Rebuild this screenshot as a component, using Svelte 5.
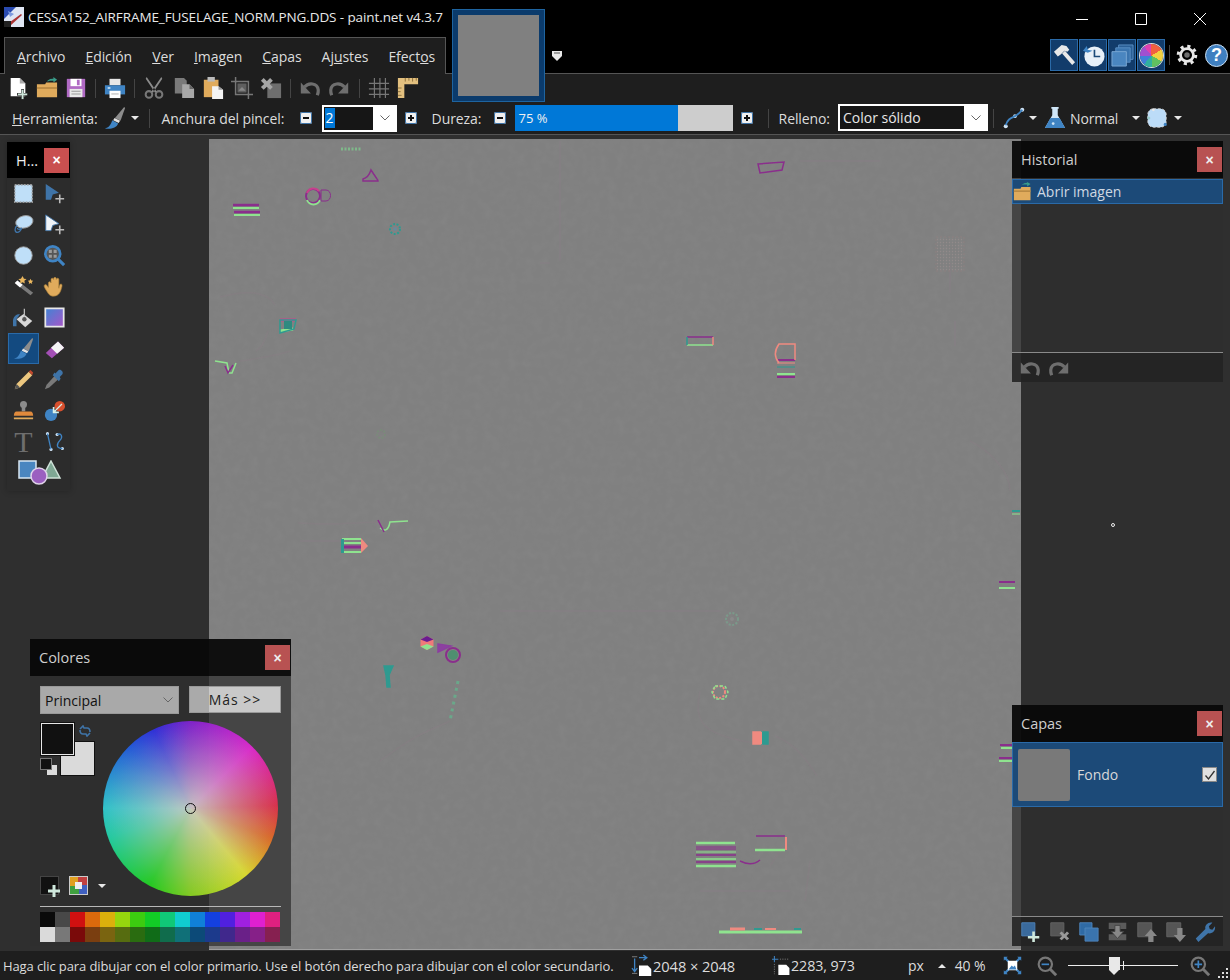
<script>
  const icons = {
    new: '<path d="M4 1h10l6 6v14H4z" fill="#fff"/><path d="M14 1l6 6h-6z" fill="#aaa"/><path d="M15.500 13h3v4.500H23v3h-4.500V25h-3v-4.500H11v-3h4.500z" fill="#2d2d2d"/><path d="M16 14h2v4h4v2h-4v4h-2v-4h-4v-2h4z" fill="#cfe8dc"/>',
    open: '<path d="M1 8h9l1-2h12v16H1z" fill="#e0ab5c"/><path d="M1 11h22v2H1z" fill="#b98a44"/><path d="M12 5c2-3 5-3 7-3V0l4 3-4 3V4c-3 0-5 0-7 1z" fill="#3a9d8a"/>',
    save: '<path d="M2 2h20v20H2z" fill="#b06ac4"/><path d="M6 2h12v8H6z" fill="#fff"/><path d="M13 3h3v6h-3z" fill="#b06ac4"/><path d="M5 13h14v9H5z" fill="#e8e8e8"/><path d="M7 15h10v1H7zm0 3h10v1H7z" fill="#999"/>',
    print: '<path d="M6 2h12v7H6z" fill="#e6e6e6"/><path d="M1 9h22v10H1z" fill="#3f84c4"/><path d="M6 15h12v8H6z" fill="#fff"/><path d="M8 18h8v1H8z" fill="#aaa"/><path d="M4 11h3v2H4z" fill="#bcd8f0"/>',
    cut: '<g fill="none" stroke="#777" stroke-width="2.200"><circle cx="6.500" cy="19" r="3.600"/><circle cx="17.500" cy="19" r="3.600"/></g><path d="M4 0l11 16-2 1L3 2zM20 0L9 16l2 1L21 2z" fill="#8c8c8c"/>',
    copy: '<path d="M2 1h10l3 3v14H2z" fill="#7a7a7a"/><path d="M10 8h8l5 5v10H10z" fill="#a8a8a8"/><path d="M18 8l5 5h-5z" fill="#666"/>',
    paste: '<path d="M2 3h16v19H2z" fill="#e0ab5c"/><path d="M6 0h8v5H6z" fill="#bbb"/><path d="M11 10h7l5 4v10H11z" fill="#f4f4f4"/><path d="M18 10l5 4h-5z" fill="#999"/>',
    crop: '<path d="M5 0v19h19" fill="none" stroke="#777" stroke-width="1.600"/><path d="M0 5h19v19" fill="none" stroke="#777" stroke-width="1.600"/><path d="M7 7h10v10H7z" fill="#5f5f5f"/><path d="M8 15l4-4 4 4z" fill="#888"/>',
    del: '<path d="M8 7h15v16H8z" fill="#6e6e6e"/><path d="M1 4l3-3 3.500 3.500L11 1l3 3-3.500 3.500L14 11l-3 3-3.500-3.500L4 14l-3-3 3.500-3.500z" fill="#a5a5a5"/>',
    undo: '<path d="M6 11c4-5 14-5 15 3 .2 2-.3 4-1 6" fill="none" stroke="#6e6e6e" stroke-width="3.500"/><path d="M2 6v12h11z" fill="#6e6e6e"/>',
    redo: '<path d="M18 11c-4-5-14-5-15 3-.2 2 .3 4 1 6" fill="none" stroke="#6e6e6e" stroke-width="3.500"/><path d="M22 6v12H11z" fill="#6e6e6e"/>',
    grid: '<path d="M7 1v22M13 1v22M19 1v22M1 7h22M1 13h22M1 19h22" stroke="#777" stroke-width="1.300" fill="none"/>',
    rulers: '<path d="M1 1h22v7H8v15H1z" fill="#e3c07f"/><path d="M9 1v4M13 1v3M17 1v4M21 1v3M1 12h4M1 16h3M1 20h4" stroke="#8a6d3a" stroke-width="1"/>',
    brush: '<path d="M22 0l1 1-5 14-6-3z" fill="#8c8c8c"/><path d="M11.500 12l6 3-1.500 2.500-6-3z" fill="#e2e2e2"/><path d="M9 14.500l6.500 3.500c-2 5-8 6.500-14.500 5.500 4-1 6-3 8-9z" fill="#3f84c4"/>',
    pathcurve: '<circle cx="3" cy="21" r="2.200" fill="#cfe3f5"/><circle cx="21" cy="3" r="2.200" fill="#cfe3f5"/><circle cx="13" cy="10" r="2" fill="#cfe3f5"/><path d="M3 20C5 13 9 12 13 10s5-3 8-7" fill="none" stroke="#3f84c4" stroke-width="2"/>',
    flask: '<path d="M8 0h8v2h-1v7l8 14H1L9 9V2H8z" fill="#cfe6f8"/><path d="M7 12h10l6 11H1z" fill="#3f84c4"/><circle cx="10" cy="18" r="1.500" fill="#cfe6f8"/>',
    selection: '<rect x="2" y="2" width="20" height="20" rx="6" fill="#bcdcf8" stroke="#d8d8d8" stroke-dasharray="3 2"/><circle cx="3" cy="12" r="1.700" fill="#9cc"/><circle cx="21" cy="19" r="1.700" fill="#3f84c4"/><circle cx="8" cy="3" r="1.500" fill="#e8e8e8"/>',
    hammer: '<path d="M1 8L9 1l5 1 3 4-2 2-3-1-4 4-3 2z" fill="#e8e8e8"/><path d="M9.500 10l3-3L23 19l-3 3z" fill="#e8e8e8"/>',
    clock: '<circle cx="13" cy="13" r="10.500" fill="#e8f0f8"/><path d="M13 6v7h6" fill="none" stroke="#1c4a78" stroke-width="1.700"/><path d="M1 7l4-5 1 4 5 1-5 2z" fill="#3f84c4"/>',
    layers: '<path d="M8 1h15v15H8z" fill="#2a5f96" stroke="#5b8fc4"/><path d="M5 4h15v15H5z" fill="#3a74ae" stroke="#5b8fc4"/><path d="M1 8h15v15H1z" fill="#4a86c0" stroke="#7aa7d4"/>',
    gear: '<circle cx="12" cy="12" r="7" fill="none" stroke="#e8e8e8" stroke-width="3"/><circle cx="12" cy="12" r="9.500" fill="none" stroke="#e8e8e8" stroke-width="3.400" stroke-dasharray="3.400 4.060"/><circle cx="12" cy="12" r="3" fill="#6d6d6d"/>',
    rectsel: '<rect x="2" y="2" width="20" height="20" fill="#bfdff8" stroke="#9a9a9a" stroke-width="1.500" stroke-dasharray="2 1.500"/>',
    movepix: '<path d="M2 1l15 10-7 2-2 6-6 0z" fill="#3f74a8"/><path d="M18 13v10M13 18h10" stroke="#bbb" stroke-width="1.800"/>',
    lasso: '<ellipse cx="13" cy="9" rx="10" ry="7" fill="#bfdff8" stroke="#999" transform="rotate(-15 13 9)"/><path d="M5 13c-4 3-3 8 0 8s4-3 5-5c-2 2-5 2-5 0" fill="none" stroke="#3f74a8" stroke-width="1.500"/>',
    movesel: '<path d="M2 1l15 10-7 2-2 6-6 0z" fill="#f0f4f8" stroke="#3f74a8"/><path d="M18 13v10M13 18h10" stroke="#bbb" stroke-width="1.800"/>',
    ellipse: '<circle cx="12" cy="12" r="10" fill="#bfdff8" stroke="#999"/>',
    zoom: '<path d="M15 15l8 8" stroke="#3f84c4" stroke-width="3.500"/><circle cx="10" cy="10" r="8.500" fill="#555" stroke="#3f84c4" stroke-width="3"/><path d="M5.500 5.500h3.500v3.500H5.500zM11 5.500h3.500v3.500H11zM5.500 11h3.500v3.500H5.500zM11 11h3.500v3.500H11z" fill="#9a9a9a"/>',
    wand: '<path d="M2 8l3-3 18 14-3 3z" fill="#7a7a7a"/><path d="M2 8l3-3 6 5-3 3z" fill="#fff"/><path d="M11 0l1.500 3 3 .5-2.500 2 .5 3-2.500-1.500L8 8.500l.5-3-2.500-2 3-.5zM20 3l1 2 2 .5-1.500 1.500.5 2-2-1-2 1 .5-2L17 5.500l2-.5z" fill="#eab75e"/>',
    hand: '<path d="M5 13V8c0-2 3-2 3 0V4c0-2 3-2 3 0V3c0-2 3-2 3 0v1c0-2 3-2 3 0v10c0 0 0-4 2-5 2 0 2 2 1 5-1 4-3 9-9 9-5 0-6-3-8-6-2-3-4-6-2-7 2-1 4 3 4 3z" fill="#e0ab5c" stroke="#a37935" stroke-width=".7"/>',
    bucket: '<path d="M12 8l10 8-8 7-10-9z" fill="#d8d8d8"/><path d="M13 2v12" stroke="#bbb" stroke-width="1.500"/><circle cx="13" cy="14" r="2.500" fill="#555"/><path d="M8 8c-5 0-8 4-8 8v6h4v-7c0-2 1-3 2-4z" fill="#3f74a8"/>',
    gradient: '<path d="M1.500 1.500h21v21h-21z" fill="url(#grad)" stroke="#e8e8e8" stroke-width="2"/><defs><linearGradient id="grad" x1="0" y1="0" x2="1" y2="1"><stop offset="0" stop-color="#3f84d4"/><stop offset="1" stop-color="#a855c8"/></linearGradient></defs>',
    eraser: '<path d="M2 17L16 4l7 7-14 12z" fill="#a34fb5"/><path d="M8 11l8-7 7 7-8 7z" fill="#f5f5f5"/>',
    pencil: '<path d="M2 23l2-6L18 3l4 4L8 21z" fill="#ecc77f"/><path d="M2 23l2-6 4 4z" fill="#555"/><path d="M18 3l2-2 3 3-1 3z" fill="#c2482e"/>',
    dropper: '<path d="M1 23l2-5 9-10 4 4-10 9z" fill="#7a7a7a"/><path d="M10 7l7 7 2-3-1-2 3-3c2-3-3-7-5-4l-3 3-1-1z" fill="#3f74a8"/>',
    stamp: '<circle cx="12" cy="5" r="4" fill="#8c8c8c"/><path d="M10 8h4v5h-4z" fill="#8c8c8c"/><path d="M4 13h16c2 0 3 2 3 5H1c0-3 1-5 3-5z" fill="#e08a3c"/><path d="M1 20h22v2H1z" fill="#e0ab5c"/>',
    recolor: '<circle cx="18" cy="7" r="6" fill="#d8502e"/><circle cx="8" cy="17" r="7" fill="#3f84c4"/><path d="M20 4l-8 8 0-4-2 0 0 7h7l0-2-4 0 8-8z" fill="#d8f0e8"/>',
    curve: '<circle cx="4" cy="3" r="1.800" fill="#cfe3f5"/><circle cx="8" cy="21" r="1.800" fill="#cfe3f5"/><circle cx="15" cy="4" r="1.800" fill="#cfe3f5"/><circle cx="21" cy="20" r="1.800" fill="#cfe3f5"/><path d="M4 3l4 18M15 4c5-2 7 3 3 7s-4 9 3 9" fill="none" stroke="#3f84c4" stroke-width="1.500"/>',
    fit: '<path d="M1 1h5l-1.500 1.500L8 6 6 8 2.500 4.500 1 6zM23 1v5l-1.500-1.500L18 8l-2-2 3.500-3.500L18 1zM1 23v-5l1.500 1.500L6 16l2 2-3.500 3.500L6 23zM23 23h-5l1.500-1.500L16 18l2-2 3.500 3.500L23 18z" fill="#3f84c4"/><path d="M6 6h12v12H6z" fill="#fff"/><path d="M7 17l4-5 2 2 2-2 2 5z" fill="#3f84c4"/>',
    zoomout: '<path d="M15 15l8 8" stroke="#777" stroke-width="3.500"/><circle cx="10" cy="10" r="8" fill="none" stroke="#777" stroke-width="2.600"/><path d="M5.500 9h9v2h-9z" fill="#3f84c4"/>',
    zoomin: '<path d="M15 15l8 8" stroke="#777" stroke-width="3.500"/><circle cx="10" cy="10" r="8" fill="none" stroke="#777" stroke-width="2.600"/><path d="M5.500 9h3.500V5.500h2V9h3.500v2H11v3.500H9V11H5.500z" fill="#3f84c4"/>',
    size: '<path d="M8 12h10l4 4v8H8z" fill="#fff"/><path d="M8 3h8M13 0l4 3-4 3" fill="none" stroke="#3f84c4" stroke-width="1.500"/><path d="M3 4v14M0 15l3 4 3-4" fill="none" stroke="#3f84c4" stroke-width="1.500"/><path d="M0 21h6M0 2h6" stroke="#888"/>',
    cursor: '<path d="M3 0v8M0 4h8" stroke="#3f84c4" stroke-width="1.300"/><path d="M3 10v13M10 4h12" stroke="#888" stroke-dasharray="1.500 1.500"/><path d="M8 11h10l4 4v9H8z" fill="#fff"/>',
    lnew: '<path d="M2 2h15v15H2z" fill="#3a6a9c" stroke="#4f85bc"/><path d="M14 12h3v5h5v3h-5v4h-3v-4H9v-3h5z" fill="#cfe8dc"/>',
    ldel: '<path d="M2 2h15v15H2z" fill="#555" stroke="#666"/><path d="M12 14l2.500-2 3 3 3-3 2.500 2-3 3 3 3-2.500 2-3-3-3 3-2.500-2 3-3z" fill="#999"/>',
    ldup: '<path d="M2 2h14v14H2z" fill="#2f6aa4" stroke="#4f85bc"/><path d="M8 8h15v15H8z" fill="#3a74ae" stroke="#4f85bc"/>',
    lmerge: '<path d="M2 2h20v7H2zM2 15h20v7H2z" fill="#5b5b5b"/><path d="M9 5h6v7h4l-7 8-7-8h4z" fill="#888" stroke="#444"/>',
    lup: '<path d="M2 2h16v16H2z" fill="#555" stroke="#666"/><path d="M17 9l7 8h-4v7h-6v-7h-4z" fill="#888"/>',
    ldown: '<path d="M2 2h16v16H2z" fill="#555" stroke="#666"/><path d="M14 8h6v8h4l-7 8-7-8h4z" fill="#888"/>',
    wrench: '<path d="M2 20L13 9c-1-4 3-8 8-7l-4 4 1 3 3 1 3-4c1 5-3 9-8 8L5 24z" fill="#3f74a8"/>',
    folderh: '<path d="M1 8h8l1-2h11v16H1z" fill="#e0ab5c"/><path d="M1 10h20v2H1z" fill="#b98a44"/><path d="M10 4c2-2 5-3 7-3V0l4 2.500-4 3V3c-3 0-5 0-7 1z" fill="#3a9d8a"/>'
  };

  const fileTools = [['new', 'open', 'save'], ['print'], ['cut', 'copy', 'paste', 'crop', 'del'], ['undo', 'redo'], ['grid', 'rulers']];
  const tools = ['rectsel', 'movepix', 'lasso', 'movesel', 'ellipse', 'zoom', 'wand', 'hand', 'bucket', 'gradient', 'brush', 'eraser', 'pencil', 'dropper', 'stamp', 'recolor', 'T', 'curve'];

  const topColors = ['#0a0a0a', '#484848', '#d01010', '#dc6a0c', '#dcb00c', '#96d60e', '#3ccc10', '#12cc26', '#10c878', '#10ccd0', '#1080d8', '#1440e0', '#5020e0', '#a020e0', '#e020d0', '#e02080'];
  const lowColors = ['#dadada', '#787878', '#7a0a0a', '#7a3e10', '#7a6410', '#566c10', '#2a6c10', '#106c18', '#106c4c', '#107078', '#0c4a78', '#1c3a8c', '#40288c', '#6a2088', '#862088', '#862050'];

  const P = '#8a2f8c', G = '#8fe38f', T = '#2f9a90', S = '#ef8a80';
  // marks on the canvas, in page coordinates
  const lines = [
    [233, 204, 259, 204, P, 2.500], [233, 207, 259, 207, G, 2], [234, 211, 260, 211, P, 2.500], [234, 214, 260, 214, G, 2],
    [687, 336, 713, 336, P, 1.500], [687, 344, 713, 344, G, 1.500], [687, 336, 687, 344, T, 1.500], [713, 336, 713, 344, S, 1.500],
    [778, 359, 795, 359, P, 2], [777, 362, 795, 362, S, 1], [777, 366, 795, 366, T, 1], [777, 373, 795, 373, G, 2], [777, 376, 795, 376, P, 2],
    [342, 538, 361, 538, G, 2], [342, 542, 361, 542, G, 2], [342, 546, 361, 546, P, 3], [342, 551, 361, 551, G, 2],
    [696, 842, 735, 842, G, 2.500], [696, 846, 736, 846, P, 1], [696, 848, 736, 848, P, 1], [696, 851, 736, 851, G, 1], [696, 854, 736, 854, P, 1.500], [696, 858, 736, 858, G, 1.500], [696, 861, 736, 861, P, 1.500], [696, 865, 736, 865, G, 2.500],
    [756, 835, 785, 835, P, 1.500], [755, 849, 785, 849, G, 2.500], [786, 836, 786, 849, S, 2],
    [719, 931, 802, 931, G, 3], [730, 928, 745, 928, S, 3], [754, 928, 762, 928, T, 2], [765, 928, 776, 928, S, 2], [794, 928, 801, 928, T, 2],
    [1000, 744, 1012, 744, P, 2], [1001, 747, 1012, 747, G, 2], [999, 757, 1012, 757, P, 2], [999, 760, 1012, 760, G, 2],
    [999, 581, 1015, 581, P, 2], [999, 587, 1015, 587, G, 2], [1012, 510, 1020, 510, T, 2], [1012, 513, 1020, 513, G, 1],
    [341, 148, 361, 148, '#7fb98a', 3, '2 1.500'], [280, 319, 296, 319, '#c8408c', 3], [280, 330, 293, 328, G, 3]
  ];
  const faint = [
    'M220 296c30-8 48-4 55 8', 'M268 330c-4 12-6 16-12 20', 'M560 140v120', 'M700 690c-6 30 0 44 55 52', 'M775 735c16 6 30 20 42 40',
    'M298 522c30 2 50 0 82-1', 'M300 540h40', 'M380 760c40-30 50-30 70-40', 'M790 835l-20 30', 'M810 860l-5 40', 'M540 262h10', 'M700 890h90',
    'M950 262v30', 'M955 320v25', 'M880 160h-80', 'M240 360c20-3 40-6 50-10', 'M500 610h220', 'M970 440c20 10 40 30 40 50'
  ];
  const shapes = [
    ['M758 163l26-2-2 8-22 3z', P], ['M363 178c4-1 6-3 8-9l6 9c1 1 1 2 1 2h-15z', P], ['M280 319h16l-2 9-14 4z', T],
    ['M215 360l12 2 2 10 3 0 4-10', G], ['M779 362c-5-6-5-12 0-19h16v16', S], ['M380 527c4 3 8 4 10-6l18-1', G], ['M378 519l6 12', P],
    ['M384 665h9l-4 9 1 12h-3l-1-12z', T], ['M438 643l13 2-13 6z', '#8c3fa0'], ['M753 731h9v12h-9z', S], ['M762 731h6v12h-6z', T],
    ['M740 860c8 4 14 4 20-1', P], ['M225 365l3 7 5-8', P]
  ];
  const wells = [[313, 195, 7, P], [395, 228, 5, T], [381, 433, 4, '#7a8a7a'], [732, 618, 6, '#7a9a8a'], [719, 691, 6, S], [453, 654, 7, P]];
</script>

{#snippet icon(name, size = 20)}
  <svg class="ic" viewBox="0 0 24 24" width={size} height={size}>{@html icons[name]}</svg>
{/snippet}

{#snippet close()}
  <span class="close">×</span>
{/snippet}

{#snippet drop()}
  <span class="drop"></span>
{/snippet}

{#snippet chevron()}
  <svg class="chev" viewBox="0 0 10 6" width="10" height="6"><path d="M.5.5L5 5 9.500.5" fill="none" stroke="#666"/></svg>
{/snippet}

{#snippet stepper(sign)}
  <span class="step"><i></i>{#if sign === '+'}<b></b>{/if}</span>
{/snippet}

<div class="app">
  <header class="titlebar">
    <svg class="appicon" viewBox="0 0 20 20" width="20" height="20">
      <path d="M0 0h20v20H0z" fill="#dfe6f3"/><path d="M0 0h12L0 12z" fill="#2a4bb0"/><path d="M4 4l6 3-4 3z" fill="#7d9be0"/><path d="M2 18L17 7l1 1L6 19z" fill="#a33"/><path d="M0 14h7v6H0z" fill="#222"/>
    </svg>
    <span class="doc">CESSA152_AIRFRAME_FUSELAGE_NORM.PNG.DDS - paint.net v4.3.7</span>
    <div class="winctl">
      <svg width="14" height="14" viewBox="0 0 14 14"><path d="M1 7.500h12" stroke="#fff"/></svg>
      <svg width="14" height="14" viewBox="0 0 14 14"><path d="M1.500 1.500h11v11h-11z" fill="none" stroke="#fff"/></svg>
      <svg width="14" height="14" viewBox="0 0 14 14"><path d="M1 1l12 12M13 1L1 13" stroke="#fff"/></svg>
    </div>
  </header>

  <div class="menubar">
    <nav class="menu">
      <span><u>A</u>rchivo</span><span><u>E</u>dición</span><span><u>V</u>er</span><span><u>I</u>magen</span><span><u>C</u>apas</span><span>Aj<u>u</u>stes</span><span>Efect<u>o</u>s</span>
    </nav>
    <div class="tabdrop"><svg viewBox="0 0 12 12" width="12" height="12"><path d="M1 1h10v5l-5 5-5-5z" fill="#e8e8e8"/><path d="M3 3h6" stroke="#555"/></svg></div>
    <div class="winbtns">
      <span class="wb">{@render icon('hammer', 23)}</span>
      <span class="wb">{@render icon('clock', 23)}</span>
      <span class="wb">{@render icon('layers', 23)}</span>
      <span class="wb"><span class="pie"></span></span>
      <i class="vsep"></i>
      {@render icon('gear', 22)}
      <span class="help">?</span>
    </div>
  </div>

  <div class="thumb"><div class="thumb-in"></div></div>

  <div class="bar row1">
    {#each fileTools as group, g}
      {#if g > 0}<i class="sep"></i>{/if}
      {#each group as name}
        <span class="cell">{@render icon(name, 22)}</span>
      {/each}
    {/each}
  </div>

  <div class="bar row2">
    <span class="lbl"><u>H</u>erramienta:</span>
    <span class="brushbtn">{@render icon('brush', 22)}{@render drop()}</span>
    <i class="sep s2"></i>
    <span class="lbl w127">Anchura del pincel:</span>
    {@render stepper('-')}
    <div class="combo c75"><span class="cin"><em>2</em></span>{@render chevron()}</div>
    {@render stepper('+')}
    <span class="lbl dureza">Dureza:</span>
    {@render stepper('-')}
    <div class="slider"><div class="fill" style="width: 75%">75 %</div></div>
    {@render stepper('+')}
    <i class="sep s3"></i>
    <span class="lbl">Relleno:</span>
    <div class="combo c150"><span class="cin">Color sólido</span>{@render chevron()}</div>
    <i class="sep s4"></i>
    <span class="opt first">{@render icon('pathcurve', 22)}{@render drop()}</span>
    <span class="opt blend">{@render icon('flask', 22)}<span class="lbl norm">Normal</span>{@render drop()}</span>
    <span class="opt last">{@render icon('selection', 22)}{@render drop()}</span>
  </div>

  <main class="work">
    <div class="canvas">
      <svg viewBox="209 138 812 810" width="812" height="810">
        <defs>
          <filter id="grain" x="0" y="0" width="100%" height="100%">
            <feTurbulence type="fractalNoise" baseFrequency="0.12" numOctaves="2" seed="4" />
            <feColorMatrix values="0 0 0 0 .5  0 0 0 0 .5  0 0 0 0 .5  .9 .9 0 0 -.7" />
          </filter>
          <filter id="soft"><feGaussianBlur stdDeviation="0.45" /></filter>
          <pattern id="hatch" width="3" height="3" patternUnits="userSpaceOnUse">
            <circle cx="1.500" cy="1.500" r=".7" fill="#928a8a" />
          </pattern>
        </defs>
        <rect x="209" y="138" width="812" height="810" fill="#7c7c7c" filter="url(#grain)" opacity=".08" />
        <g filter="url(#soft)">
          {#each faint as d}
            <path {d} fill="none" stroke="#8c7a84" stroke-opacity=".3" stroke-width="1.500" />
          {/each}
          {#each lines as [x1, y1, x2, y2, stroke, w, dash]}
            <line {x1} {y1} {x2} {y2} {stroke} stroke-width={w} stroke-dasharray={dash} />
          {/each}
          {#each shapes as [d, stroke]}
            <path {d} fill="none" {stroke} stroke-width="1.500" />
          {/each}
          <path d="M384 665h9l-4 9 1 12h-3l-1-12z" fill="#2f9a90" />
          <path d="M438 643l13 2-13 6z" fill="#8c3fa0" />
          <rect x="753" y="731" width="9" height="12" fill="#ef8a80" />
          <rect x="762" y="731" width="6" height="12" fill="#2f9a90" />
          <rect x="341" y="538" width="3" height="14" fill="#2f9a90" />
          <path d="M361 537l7 8-7 7z" fill="#ef8a80" />
          <rect x="284" y="320" width="8" height="8" fill="#2f8a80" />
          {#each wells as [cx, cy, r, stroke]}
            <circle {cx} {cy} {r} fill="none" {stroke} stroke-width="2" stroke-dasharray={r < 7 ? '2 1.500' : undefined} />
          {/each}
          <path d="M427 635l6.500 3.500v7L427 649l-6.500-3.500v-7z" fill="#ef7a7a" />
          <path d="M420.500 638.500L427 635l6.500 3.500L427 641z" fill="#6a1f90" />
          <path d="M420.500 645.500L427 649l6.500-3.500L427 643z" fill="#8fe38f" />
          <circle cx="453" cy="654" r="5" fill="#4f8f70" />
          <path d="M307 192a7 7 0 0 1 12 -2" fill="none" stroke="#c8408c" stroke-width="2" />
          <path d="M307 199a7 7 0 0 0 13 0" fill="none" stroke={G} stroke-width="2" />
          <path d="M321 189h5c6 0 6 11 0 11h-5z" fill="none" stroke={P} stroke-width="1" />
          <path d="M458 680l-8 40" stroke="#6aa88a" stroke-width="3" stroke-dasharray="3 4" />
          <rect x="936" y="236" width="28" height="34" fill="url(#hatch)" stroke="#94807f" stroke-opacity=".6" stroke-dasharray="2 2" />
          <path d="M715 685h10l3 6-3 7h-10l-3-7z" fill="none" stroke={G} stroke-width="1.500" stroke-dasharray="3 2" />
          <circle cx="395" cy="228" r="2" fill="#6a8a9a" />
          <circle cx="732" cy="618" r="2" fill="#8a8a8a" />
        </g>
      </svg>
    </div>

    <section class="tools">
      <div class="tbar slim"><span class="ttext white">H...</span><span class="closefull">×</span></div>
      <div class="toolgrid">
        {#each tools as t}
          <span class="tool" class:active={t === 'brush'}>
            {#if t === 'T'}<span class="bigt">T</span>{:else}{@render icon(t, 21)}{/if}
          </span>
        {/each}
      </div>
      <svg class="shapes" viewBox="0 0 44 26" width="44" height="26">
        <rect x="1" y="1" width="17" height="17" fill="#4a86c0" stroke="#d8e6f2" stroke-width="1.500" />
        <path d="M33 1l9 17H24z" fill="#7fa894" stroke="#cfe2d8" stroke-width="1.500" />
        <circle cx="21" cy="16" r="8" fill="#9b5fc0" stroke="#e0d4ea" stroke-width="1.500" />
      </svg>
    </section>

    <section class="float colors">
      <div class="tbar"><span class="ttext">Colores</span>{@render close()}</div>
      <div class="cbody">
        <div class="ctop">
          <div class="picker">Principal{@render chevron()}</div>
          <div class="more">Más &gt;&gt;</div>
        </div>
        <div class="cmid">
          <div class="wells">
            <span class="primary"></span>
            <span class="secondary"></span>
            <span class="reset"></span>
            <svg class="swap" viewBox="0 0 12 12" width="12" height="12"><path d="M1 4l3-3 1 2h3c2 0 3 2 3 4M11 8l-3 3-1-2H4C2 9 1 7 1 5" fill="none" stroke="#3f74a8" stroke-width="1.600"/></svg>
          </div>
          <div class="wheel"><span class="ring"></span></div>
        </div>
        <div class="cbtns">
          <span class="addc"><svg viewBox="0 0 12 12" width="12" height="12"><path d="M4.500 0h3v4.500H12v3H7.500V12h-3V7.500H0v-3h4.500z" fill="#cfe8dc"/></svg></span>
          <span class="pal"><i></i></span>
          {@render drop()}
        </div>
        <hr />
        <div class="swatches">
          {#each [...topColors, ...lowColors] as c}
            <span style="background: {c}"></span>
          {/each}
        </div>
      </div>
    </section>

    <section class="float history">
      <div class="tbar"><span class="ttext">Historial</span>{@render close()}</div>
      <div class="hrow">{@render icon('folderh', 20)}<span>Abrir imagen</span></div>
      <div class="spacer"></div>
      <div class="hfoot">{@render icon('undo', 22)}{@render icon('redo', 22)}</div>
    </section>

    <section class="float layers">
      <div class="tbar"><span class="ttext">Capas</span>{@render close()}</div>
      <div class="lrow">
        <span class="lthumb"></span>
        <span class="lname">Fondo</span>
        <span class="check"><svg viewBox="0 0 12 12" width="12" height="12"><path d="M1.500 6.500L4.500 10l6-8" fill="none" stroke="#333" stroke-width="1.300"/></svg></span>
      </div>
      <div class="spacer"></div>
      <div class="lfoot">
        {#each ['lnew', 'ldel', 'ldup', 'lmerge', 'lup', 'ldown', 'wrench'] as name}
          {@render icon(name, 21)}
        {/each}
      </div>
    </section>

    <span class="cursor"></span>
  </main>

  <footer class="status">
    <span class="hint">Haga clic para dibujar con el color primario. Use el botón derecho para dibujar con el color secundario.</span>
    <span class="sz">{@render icon('size', 21)}2048 × 2048</span>
    <span class="pos">{@render icon('cursor', 19)}2283, 973</span>
    <span class="unit">px</span>
    <span class="up"></span>
    <span class="pct">40 %</span>
    <span class="fit">{@render icon('fit', 19)}</span>
    <span class="zo">{@render icon('zoomout', 20)}</span>
    <div class="zoomtrack"><i class="tick"></i><i class="knob"></i></div>
    <span class="zi">{@render icon('zoomin', 20)}</span>
    <svg class="grip" viewBox="0 0 11 11" width="11" height="11"><path d="M8 1h2v2H8zM4 5h2v2H4zM8 5h2v2H8zM0 9h2v2H0zM4 9h2v2H4zM8 9h2v2H8z" fill="#ddd"/></svg>
  </footer>
</div>

<style>
  :global(body) {
    margin: 0;
    background: #000;
  }
  .app {
    position: relative;
    width: 1230px;
    height: 980px;
    overflow: hidden;
    display: flex;
    flex-direction: column;
    font-family: "Open Sans", "Noto Sans", sans-serif;
    font-size: 14px;
    color: #dcdcdc;
    background: #000;
  }
  .ic {
    display: block;
    flex: none;
    overflow: visible;
  }
  .titlebar {
    height: 37px;
    display: flex;
    align-items: center;
    flex: none;
    color: #e8e8e8;
  }
  .appicon {
    margin: -4px 0 0 4px;
  }
  .doc {
    margin: -4px 0 0 4px;
    font-size: 13.500px;
    letter-spacing: -0.1px;
  }
  .winctl {
    margin-left: auto;
    margin-right: 23px;
    display: flex;
    gap: 45px;
  }
  .menubar {
    height: 37px;
    flex: none;
    display: flex;
    border-bottom: 1px solid #555;
    box-sizing: border-box;
  }
  .menu {
    margin-left: 4px;
    width: 442px;
    height: 37px;
    box-sizing: border-box;
    padding: 9px 0 0 12px;
    display: flex;
    gap: 20px;
    background: #1e1e1e;
    border: 1px solid #555;
    border-bottom: 0;
    font-size: 14px;
    letter-spacing: -0.06px;
    line-height: 20px;
  }
  .tabdrop {
    margin: 10px 0 0 105px;
  }
  .winbtns {
    margin-left: auto;
    display: flex;
    align-items: center;
    height: 36px;
    margin-top: -6px;
    padding: 12px 2px 0 0;
    box-sizing: border-box;
    gap: 1px;
  }
  .winbtns .help {
    margin-left: 6px;
  }
  .wb {
    width: 28px;
    height: 32px;
    box-sizing: border-box;
    display: flex;
    align-items: center;
    justify-content: center;
    background: #123c6b;
    border: 1px solid #2a6aa8;
  }
  .pie {
    width: 23px;
    height: 23px;
    border-radius: 50%;
    background: conic-gradient(#f06040 0 60deg, #f0d040 60deg 120deg, #60c060 120deg 180deg, #30b0a0 180deg 220deg, #4080d8 220deg 270deg, #a050d0 270deg 320deg, #e040b0 320deg);
    box-shadow: 0 0 0 1px #ddd;
  }
  .vsep {
    width: 1px;
    height: 20px;
    background: #444;
    margin: 0 5px 0 3px;
  }
  .help {
    width: 23px;
    height: 23px;
    border-radius: 50%;
    background: #3f7fc0;
    border: 1px solid #c8ddf0;
    box-sizing: border-box;
    color: #fff;
    font: 700 18px/21px "Liberation Sans", sans-serif;
    text-align: center;
  }
  .thumb {
    position: absolute;
    left: 452px;
    top: 9px;
    width: 93px;
    height: 93px;
    box-sizing: border-box;
    padding: 5px;
    background: #0b3b6c;
    border: 1px solid #1e64a0;
  }
  .thumb-in {
    height: 100%;
    background: #808080;
  }
  .bar {
    background: #1e1e1e;
    flex: none;
    display: flex;
    align-items: center;
  }
  .row1 {
    height: 28px;
    padding-left: 3px;
  }
  .cell {
    width: 29.200px;
    display: flex;
    justify-content: center;
  }
  .sep {
    width: 1px;
    height: 19px;
    background: #444;
    margin: 0 5px;
  }
  .row1 .sep {
    margin: 0 4.500px;
  }
  .row2 {
    height: 32px;
    border-bottom: 1px solid #555;
    padding-left: 12px;
    box-sizing: content-box;
  }
  .lbl {
    white-space: nowrap;
    letter-spacing: -0.1px;
  }
  .brushbtn {
    display: flex;
    align-items: center;
    gap: 5px;
    margin-left: 6px;
  }
  .drop {
    display: inline-block;
    width: 0;
    height: 0;
    border: 4px solid transparent;
    border-top: 4px solid #e8e8e8;
    border-bottom: 0;
  }
  .row2 .s2 {
    margin: 0 12px 0 10px;
  }
  .w127 {
    width: 138px;
  }
  .step {
    position: relative;
    width: 12px;
    height: 12px;
    border-radius: 2px;
    background: #f0f0f0;
    box-shadow: inset 0 0 0 1px #3f74a8;
    flex: none;
  }
  .step i {
    position: absolute;
    left: 3px;
    top: 5px;
    width: 6px;
    height: 2px;
    background: #111;
  }
  .step b {
    position: absolute;
    left: 5px;
    top: 3px;
    width: 2px;
    height: 6px;
    background: #111;
  }
  .combo {
    height: 27px;
    box-sizing: border-box;
    background: #fff;
    border: 2px solid #fff;
    display: flex;
    align-items: center;
    flex: none;
    margin-top: -1px;
  }
  .c75 {
    width: 75px;
    margin: 0 8px 0 10px;
  }
  .c150 {
    width: 150px;
    margin-left: 8px;
  }
  .cin {
    background: #161616;
    color: #e8e8e8;
    height: 100%;
    flex: 1;
    display: flex;
    align-items: center;
    padding-left: 3px;
  }
  .cin em {
    font-style: normal;
    background: #0078d7;
    color: #fff;
    line-height: 20px;
    padding: 0 1px;
    margin-left: -2px;
  }
  .chev {
    margin: 0 5px 0 7px;
  }
  .dureza {
    margin: 0 12px 0 15px;
    width: 50px;
  }
  .slider {
    width: 218px;
    height: 26px;
    margin: 0 8px 0 9px;
    background: #cdcdcd;
    flex: none;
  }
  .fill {
    height: 100%;
    background: #0078d7;
    color: #f0f0f0;
    line-height: 26px;
    padding-left: 4px;
    box-sizing: border-box;
    font-size: 13px;
  }
  .row2 .s3 {
    margin: 0 10px 0 15px;
  }
  .row2 .s4 {
    margin: 0 9px 0 5px;
  }
  .opt {
    display: flex;
    align-items: center;
    gap: 4px;
  }
  .blend {
    margin-left: 7px;
    gap: 4px;
  }
  .norm {
    width: 58px;
  }
  .last {
    margin-left: 6px;
    gap: 6px;
  }
  .work {
    position: relative;
    flex: none;
    height: 816px;
    background: #2f2f2f;
  }
  .canvas {
    position: absolute;
    left: 209px;
    top: 4px;
    width: 812px;
    height: 810px;
    background: #808080;
    border-bottom: 1px solid #a0a0a0;
  }
  .canvas svg {
    display: block;
  }
  .tbar {
    height: 37px;
    flex: none;
    display: flex;
    align-items: center;
    justify-content: space-between;
    padding: 0 1px 0 9px;
    background: rgba(0, 0, 0, 0.78);
    box-sizing: border-box;
  }
  .tbar.slim {
    background: #000;
    height: 36px;
  }
  .ttext {
    font-size: 14.500px;
    color: #cfcfcf;
  }
  .white {
    color: #f0f0f0;
  }
  .close,
  .closefull {
    width: 25px;
    height: 25px;
    display: flex;
    align-items: center;
    justify-content: center;
    background: #b85252;
    color: #eee;
    font: 700 14px "Liberation Sans", sans-serif;
  }
  .closefull {
    background: #c95050;
    color: #fff;
  }
  .tools {
    position: absolute;
    left: 7px;
    top: 7px;
    width: 63px;
    height: 349px;
    background: #2c2c2c;
    box-shadow: 0 0 6px rgba(0, 0, 0, 0.25);
    display: flex;
    flex-direction: column;
  }
  .toolgrid {
    display: grid;
    grid-template-columns: repeat(2, 31px);
    grid-auto-rows: 31px;
    padding-left: 1px;
  }
  .tool {
    display: flex;
    align-items: center;
    justify-content: center;
    box-sizing: border-box;
  }
  .active {
    background: #134a80;
    border: 1px solid #2a6aa8;
  }
  .bigt {
    font: 30px/30px "Liberation Serif", serif;
    color: #6e6e6e;
  }
  .shapes {
    margin: 3px 0 0 11px;
    display: block;
  }
  .float {
    position: absolute;
    background: rgba(46, 46, 46, 0.72);
    display: flex;
    flex-direction: column;
  }
  .colors {
    left: 30px;
    top: 504px;
    width: 261px;
    height: 307px;
    box-sizing: border-box;
  }
  .cbody {
    padding: 10px 10px 0;
  }
  .ctop {
    display: flex;
    gap: 10px;
  }
  .picker {
    width: 139px;
    height: 28px;
    box-sizing: border-box;
    padding-left: 4px;
    display: flex;
    align-items: center;
    justify-content: space-between;
    background: #a9a9a9;
    border: 1px solid #999;
    color: #111;
  }
  .more {
    width: 92px;
    height: 27px;
    box-sizing: border-box;
    text-align: center;
    line-height: 26px;
    letter-spacing: 1px;
    color: #222;
    background: linear-gradient(90deg, #aaa 0 21%, #c9c9c9 21%);
    border: 1px solid #999;
  }
  .cmid {
    height: 173px;
    position: relative;
    margin-top: 7px;
  }
  .wells {
    position: relative;
    width: 58px;
  }
  .primary {
    position: absolute;
    z-index: 1;
    left: 0;
    top: 1px;
    width: 35px;
    height: 34px;
    box-sizing: border-box;
    background: #111;
    border: 2px solid #e8e8e8;
    outline: 1px solid #111;
    outline-offset: -1px;
  }
  .secondary {
    position: absolute;
    left: 20px;
    top: 20px;
    width: 35px;
    height: 35px;
    background: #dadada;
    box-sizing: border-box;
    border: 1px solid #111;
  }
  .reset {
    position: absolute;
    left: 0;
    top: 37px;
    width: 10px;
    height: 10px;
    background: #111;
    border: 1px solid #777;
    box-shadow: 6px 6px 0 -1px #ddd;
  }
  .swap {
    position: absolute;
    left: 39px;
    top: 4px;
  }
  .wheel {
    position: absolute;
    left: 63px;
    top: 0;
    width: 175px;
    height: 175px;
    border-radius: 50%;
    opacity: 0.96;
    background:
      radial-gradient(circle, rgba(205, 208, 200, 0.95) 0, rgba(205, 208, 200, 0.5) 35%, rgba(205, 208, 200, 0.08) 72%, rgba(205, 208, 200, 0) 100%),
      conic-gradient(#7a10d0 0deg, #e018d0 45deg, #e02040 88deg, #e06018 110deg, #e0e020 140deg, #80d010 180deg, #10d010 208deg, #10d0a0 250deg, #20c8d0 270deg, #1050e0 315deg, #2020e0 335deg, #7a10d0 360deg);
  }
  .ring {
    position: absolute;
    left: 82px;
    top: 82px;
    width: 11px;
    height: 11px;
    box-sizing: border-box;
    border: 1.500px solid #111;
    border-radius: 50%;
  }
  .cbtns {
    display: flex;
    align-items: center;
    gap: 10px;
    margin-top: -18px;
    height: 19px;
    position: relative;
  }
  .addc {
    width: 19px;
    height: 19px;
    box-sizing: border-box;
    background: #111;
    border: 1px solid #444;
    display: flex;
    align-items: flex-end;
    justify-content: flex-end;
  }
  .addc svg {
    margin: 0 -2px -3px 0;
  }
  .pal {
    width: 19px;
    height: 19px;
    box-sizing: border-box;
    border: 1px solid #ccc;
    background: conic-gradient(#c04040 0 25%, #4060c0 25% 50%, #40a040 50% 75%, #e0a020 75%);
    display: flex;
    align-items: center;
    justify-content: center;
  }
  .pal i {
    width: 7px;
    height: 7px;
    background: #eee;
  }
  hr {
    margin: 11px 0 5px;
    border: 0;
    height: 1px;
    background: #b8b8b8;
  }
  .swatches {
    display: grid;
    grid-template-columns: repeat(16, 15px);
    grid-auto-rows: 15px;
  }
  .history {
    left: 1012px;
    top: 6px;
    width: 211px;
    height: 241px;
  }
  .hrow {
    height: 25px;
    margin-top: 1px;
    box-sizing: border-box;
    display: flex;
    align-items: center;
    gap: 4px;
    background: #1c4a78;
    border: 1px solid #2a6aa8;
    color: #cfd8e2;
    flex: none;
  }
  .spacer {
    flex: 1;
  }
  .hfoot {
    height: 30px;
    box-sizing: border-box;
    border-top: 1px solid #8a8a8a;
    background: rgba(30, 30, 30, 0.6);
    display: flex;
    align-items: center;
    gap: 7px;
    padding-left: 7px;
  }
  .layers {
    left: 1012px;
    top: 570px;
    width: 211px;
    height: 241px;
  }
  .lrow {
    height: 65px;
    flex: none;
    box-sizing: border-box;
    display: flex;
    align-items: center;
    padding: 0 5px;
    background: #1c4a78;
    border: 1px solid #2a6aa8;
  }
  .lthumb {
    width: 52px;
    height: 52px;
    border-radius: 2px;
    background: #797979;
  }
  .lname {
    margin-left: 7px;
    color: #d8d8d8;
  }
  .check {
    margin-left: auto;
    width: 15px;
    height: 15px;
    box-sizing: border-box;
    background: #e0e0e0;
    border: 1px solid #888;
    display: flex;
    align-items: center;
    justify-content: center;
  }
  .lfoot {
    height: 30px;
    box-sizing: border-box;
    border-top: 1px solid #8a8a8a;
    background: rgba(30, 30, 30, 0.6);
    display: flex;
    align-items: center;
    gap: 8px;
    padding-left: 8px;
  }
  .cursor {
    position: absolute;
    left: 1111px;
    top: 388px;
    width: 4px;
    height: 4px;
    border: 1px solid #eee;
    border-radius: 50%;
    box-sizing: border-box;
  }
  .status {
    flex: 1;
    background: #1e1e1e;
    display: flex;
    align-items: center;
    position: relative;
    font-size: 13.500px;
    letter-spacing: -0.1px;
  }
  .hint {
    margin-left: 3px;
    width: 629px;
    font-size: 13px;
    white-space: nowrap;
    flex: none;
  }
  .sz,
  .pos {
    display: flex;
    align-items: center;
    flex: none;
    gap: 0;
  }
  .sz {
    width: 140px;
    font-size: 14.700px;
  }
  .pos {
    width: 136px;
    font-size: 14.300px;
  }
  .up {
    width: 0;
    height: 0;
    border: 4px solid transparent;
    border-bottom: 4px solid #e8e8e8;
    border-top: 0;
    margin: 0 9px 0 14px;
  }
  .unit,
  .pct {
    font-size: 14px;
  }
  .fit {
    margin-left: 17px;
  }
  .zo {
    margin-left: 15px;
  }
  .zoomtrack {
    position: relative;
    width: 110px;
    height: 1px;
    margin-left: 11px;
    background: #eee;
    flex: none;
  }
  .tick {
    position: absolute;
    left: 55px;
    top: -4px;
    width: 1px;
    height: 9px;
    background: #eee;
  }
  .knob {
    position: absolute;
    left: 41px;
    top: -8px;
    width: 11px;
    height: 13px;
    background: #e8e8e8;
  }
  .knob::after {
    content: "";
    position: absolute;
    top: 13px;
    left: 0;
    border: 5.500px solid transparent;
    border-top: 5px solid #e8e8e8;
    border-bottom: 0;
  }
  .zi {
    margin-left: 12px;
  }
  .grip {
    position: absolute;
    right: 1px;
    bottom: 2px;
  }
</style>
